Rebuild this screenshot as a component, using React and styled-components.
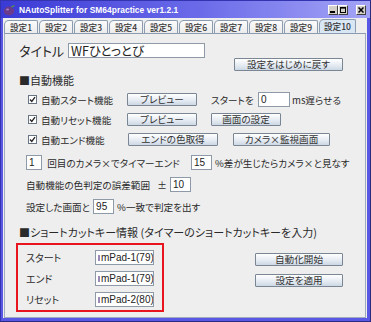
import React from "react";
import styled, { createGlobalStyle } from "styled-components";

const GlobalStyle = createGlobalStyle`
  html, body { margin: 0; padding: 0; background: #fff; }
  body { font-family: "Noto Sans CJK JP", sans-serif; color: #2a2a2a; }
`;

const Window = styled.div`
  width: 371px;
  height: 322px;
  box-sizing: border-box;
  background: #5858e4;
  border: 1px solid #3434b0;
  border-right-color: #2a2a80;
  border-bottom-color: #2a2a80;
  padding: 0 3px 3px 2px;
  display: flex;
  flex-direction: column;
`;

const TitleBar = styled.div`
  height: 17px;
  margin: 0 -3px 0 -2px;
  padding: 0 4px 0 2px;
  display: flex;
  align-items: center;
  gap: 3px;
  background: linear-gradient(to right, #3a3ad6, #6c6cea 55%, #a4a4f6);
`;

const Title = styled.span`
  flex: 1;
  color: #fff;
  font-family: "Liberation Sans", Arial, sans-serif;
  font-weight: bold;
  font-size: 8.4px;
  letter-spacing: 0.05px;
`;

const Caption = styled.div`
  display: flex;
  align-self: flex-start;
  margin-top: 4px;
`;

const CaptionButton = styled.div`
  width: 8px;
  height: 8px;
  margin-left: ${(p) => (p.$gap ? "8px" : "0")};
  background: #d4d0c8;
  border: 1px solid;
  border-color: #fff #404040 #404040 #fff;
  display: flex;
  align-items: center;
  justify-content: center;
`;

const Body = styled.div`
  flex: 1;
  background: #eeeeee;
  display: flex;
  flex-direction: column;
  padding: 1px 1px 0 1px;
`;

const Tabs = styled.div`
  display: flex;
  height: 14px;
  align-items: flex-end;
  position: relative;
  z-index: 1;
`;

const Tab = styled.div`
  width: ${(p) => (p.$wide ? "37px" : "34px")};
  height: ${(p) => (p.$active ? "14px" : "13px")};
  box-sizing: border-box;
  margin-right: 1px;
  border: 1px solid #8b9bb0;
  border-bottom: ${(p) => (p.$active ? "1px solid #d9e6f4" : "none")};
  border-radius: 5px 2px 0 0;
  background: ${(p) =>
    p.$active ? "#d9e6f4" : "linear-gradient(#fbfbfb, #ececec)"};
  font-size: 8.6px;
  font-weight: 500;
  color: #333;
  display: flex;
  align-items: center;
  justify-content: center;
  line-height: 1;
`;

const Panel = styled.div`
  flex: 1;
  border: 1px solid #a0acbd;
  border-top-color: #8b9bb0;
  background: #eeeeee;
  padding: 8px 22px 0 13px;
  display: flex;
  flex-direction: column;
  font-size: 9.6px;
  font-feature-settings: "palt";
  white-space: nowrap;
  overflow: hidden;
`;

const TitleRow = styled.div`
  display: flex;
  align-items: center;
  gap: 4px;
  height: 16px;
`;

const BigLabel = styled.span`
  font-size: 13px;
  padding-left: 1px;
`;

const TitleInput = styled.div`
  width: 137px;
  height: 15px;
  box-sizing: border-box;
  background: #fff;
  border: 1px solid #8e9aa8;
  font-size: 12.5px;
  line-height: 13px;
  padding-left: 2px;
  color: #222;
`;

const ResetRow = styled.div`
  display: flex;
  justify-content: flex-end;
`;

const Button = styled.div`
  width: ${(p) => p.$w}px;
  height: 13px;
  box-sizing: border-box;
  border: 1px solid #7b8694;
  border-radius: 1px;
  background: linear-gradient(#ffffff, #e6ecf3 55%, #cdd8e4);
  display: flex;
  align-items: center;
  justify-content: center;
  font-size: 9.6px;
  color: #333;
  line-height: 1;
  flex-shrink: 0;
`;

const Heading = styled.div`
  font-size: 11px;
  height: 14px;
  display: flex;
  align-items: center;
  margin-top: ${(p) => p.$mt}px;
  padding-left: 1px;
`;

const Rows = styled.div`
  display: flex;
  flex-direction: column;
  gap: 7px;
  margin-top: 6px;
  padding-left: 10px;
`;

const Row = styled.div`
  display: flex;
  align-items: center;
  height: 13px;
  gap: ${(p) => p.$gap ?? 14}px;
`;

const CheckLabel = styled.label`
  width: 85px;
  display: flex;
  align-items: center;
  gap: 4px;
  flex-shrink: 0;
`;

const Box = styled.span`
  width: 9px;
  height: 9px;
  box-sizing: border-box;
  border: 1px solid #6a7584;
  background: #fff;
  display: flex;
  align-items: center;
  justify-content: center;
`;

const Inline = styled.div`
  display: flex;
  align-items: center;
  gap: 2px;
  flex-shrink: 0;
`;

const Field = styled.div`
  width: ${(p) => p.$w}px;
  height: 15px;
  box-sizing: border-box;
  background: #fff;
  border: 1px solid #8e9aa8;
  font-size: 10px;
  line-height: 13px;
  padding-left: 2px;
  color: #222;
  font-family: "Liberation Sans", Arial, sans-serif;
  flex-shrink: 0;
  overflow: hidden;
  white-space: nowrap;
`;

const ParamRows = styled.div`
  display: flex;
  flex-direction: column;
  gap: 7px;
  margin-top: 9px;
  padding-left: 8px;
`;

const ParamRow = styled.div`
  display: flex;
  align-items: center;
  height: 15px;
  gap: 3px;
`;

const Spacer = styled.span`
  width: ${(p) => p.$w}px;
  flex-shrink: 0;
  letter-spacing: ${(p) => p.$ls ?? 0}px;
`;

const ShortcutArea = styled.div`
  display: flex;
  align-items: flex-start;
  margin-top: 4px;
  margin-left: -2px;
`;

const RedBox = styled.div`
  width: 148px;
  height: 69px;
  box-sizing: border-box;
  border: 2px solid #e8141e;
  padding: 5px 0 0 8px;
  display: flex;
  flex-direction: column;
  gap: 6px;
`;

const KeyRow = styled.div`
  display: flex;
  align-items: center;
  height: 15px;
`;

const KeyLabel = styled.span`
  width: 69px;
  font-size: 10px;
`;

const Caret = styled.span`
  display: inline-block;
  width: 2px;
  height: 6px;
  margin-right: 1px;
  background: #9a8ab8;
  vertical-align: middle;
`;

const SideButtons = styled.div`
  margin-left: auto;
  margin-top: 10px;
  display: flex;
  flex-direction: column;
  gap: 8px;
`;

const Check = () => (
  <Box>
    <svg width="7" height="7" viewBox="0 0 7 7">
      <path d="M1 3.5 L2.8 5.5 L6 1.2" fill="none" stroke="#222" strokeWidth="1.3" />
    </svg>
  </Box>
);

const AppIcon = () => (
  <svg width="13" height="12" viewBox="0 0 13 12">
    <ellipse cx="6" cy="7" rx="5.2" ry="4.4" fill="#6a3a8c" />
    <ellipse cx="4.5" cy="5.6" rx="1.6" ry="1" fill="#a27cc0" />
    <path d="M8 2.8 Q10 0.6 12 1.4 Q10.6 3 8.8 3.6 Z" fill="#5a9a3a" />
  </svg>
);

const tabs = ["設定1", "設定2", "設定3", "設定4", "設定5", "設定6", "設定7", "設定8", "設定9", "設定10"];

function App() {
  return (
    <Window>
      <GlobalStyle />
      <TitleBar>
        <AppIcon />
        <Title>NAutoSplitter for SM64practice ver1.2.1</Title>
        <Caption>
          <CaptionButton>
            <svg width="6" height="6" viewBox="0 0 6 6"><rect x="0" y="4" width="5" height="2" fill="#000" /></svg>
          </CaptionButton>
          <CaptionButton>
            <svg width="6" height="6" viewBox="0 0 6 6"><rect x="0.5" y="0.5" width="5" height="5" fill="none" stroke="#000" /><rect x="0" y="0" width="6" height="1.6" fill="#000" /></svg>
          </CaptionButton>
          <CaptionButton $gap>
            <svg width="6" height="6" viewBox="0 0 6 6"><path d="M0.5 0.5 L5.5 5.5 M5.5 0.5 L0.5 5.5" stroke="#000" strokeWidth="1.5" /></svg>
          </CaptionButton>
        </Caption>
      </TitleBar>
      <Body>
        <Tabs>
          {tabs.map((t, i) => (
            <Tab key={t} $active={i === 9} $wide={i === 9}>{t}</Tab>
          ))}
        </Tabs>
        <Panel>
          <TitleRow>
            <BigLabel>タイトル</BigLabel>
            <TitleInput>WFひとっとび</TitleInput>
          </TitleRow>
          <ResetRow>
            <Button $w={109}>設定をはじめに戻す</Button>
          </ResetRow>
          <Heading $mt={2}>■自動機能</Heading>
          <Rows>
            <Row>
              <CheckLabel><Check />自動スタート機能</CheckLabel>
              <Button $w={70}>プレビュー</Button>
              <Inline>
                <Spacer $w={45}>スタートを</Spacer>
                <Field $w={32}>0</Field>
                <span>ms遅らせる</span>
              </Inline>
            </Row>
            <Row>
              <CheckLabel><Check />自動リセット機能</CheckLabel>
              <Button $w={70}>プレビュー</Button>
              <Button $w={70}>画面の設定</Button>
            </Row>
            <Row $gap={15}>
              <CheckLabel><Check />自動エンド機能</CheckLabel>
              <Button $w={90}>エンドの色取得</Button>
              <Button $w={97}>カメラ×監視画面</Button>
            </Row>
          </Rows>
          <ParamRows>
            <ParamRow>
              <Field $w={16}>1</Field>
              <Spacer $w={143}>&nbsp;回目のカメラ×でタイマーエンド</Spacer>
              <Field $w={21}>15</Field>
              <span>%差が生じたらカメラ×と見なす</span>
            </ParamRow>
            <ParamRow>
              <span>自動機能の色判定の誤差範囲</span>
              <span>&nbsp;&nbsp;±</span>
              <Field $w={21}>10</Field>
            </ParamRow>
            <ParamRow>
              <span>設定した画面と</span>
              <Field $w={21}>95</Field>
              <span>%一致で判定を出す</span>
            </ParamRow>
          </ParamRows>
          <Heading $mt={11}>■ショートカットキー情報 (タイマーのショートカットキーを入力)</Heading>
          <ShortcutArea>
            <RedBox>
              <KeyRow><KeyLabel>スタート</KeyLabel><Field $w={59}><Caret />mPad-1(79)</Field></KeyRow>
              <KeyRow><KeyLabel>エンド</KeyLabel><Field $w={59}><Caret />mPad-1(79)</Field></KeyRow>
              <KeyRow><KeyLabel>リセット</KeyLabel><Field $w={59}><Caret />mPad-2(80)</Field></KeyRow>
            </RedBox>
            <SideButtons>
              <Button $w={88}>自動化開始</Button>
              <Button $w={88}>設定を適用</Button>
            </SideButtons>
          </ShortcutArea>
        </Panel>
      </Body>
    </Window>
  );
}

export default App;
